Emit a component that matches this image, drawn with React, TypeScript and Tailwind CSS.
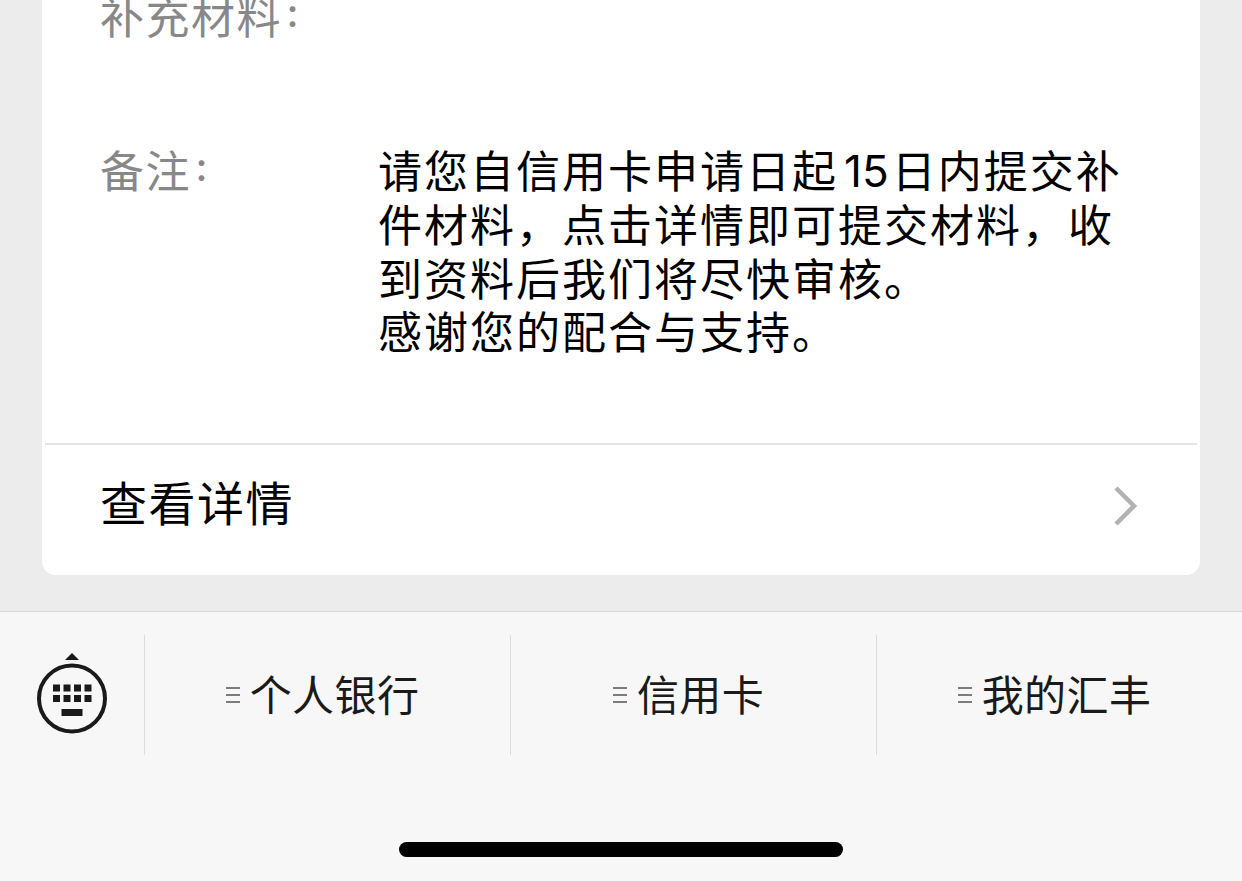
const menus = ["个人银行", "信用卡", "我的汇丰"];

function KeyboardIcon() {
  return (
    <svg width="72" height="84" viewBox="0 0 72 84" aria-hidden>
      <path d="M29 8 L36 1 L43 8 Z" fill="#1a1a1a" />
      <circle cx="36" cy="46.5" r="33" fill="none" stroke="#1a1a1a" strokeWidth="4" />
      <g fill="#1a1a1a">
        {[17, 27.5, 38, 48.5].map((x) => (
          <g key={x}>
            <rect x={x} y="32.5" width="7" height="7" />
            <rect x={x} y="43" width="7" height="7" />
          </g>
        ))}
        <rect x="25.5" y="57" width="21" height="7" />
      </g>
    </svg>
  );
}

function ListIcon() {
  return (
    <svg width="14" height="18" viewBox="0 0 14 18" className="shrink-0" aria-hidden>
      <path d="M0 2H14M0 9H14M0 16H14" stroke="#7c7c7c" strokeWidth="2" />
    </svg>
  );
}

function Label({ text }: { text: string }) {
  return (
    <dt className="w-[278px] shrink-0 tracking-[1.5px] text-[#888888]">
      {text}
      <span className="relative -top-[8px] ml-[3px] text-[30px] font-bold leading-none">：</span>
    </dt>
  );
}

function DetailCard() {
  return (
    <section className="mx-[42px] flex h-[575px] flex-col overflow-hidden rounded-b-[14px] bg-white">
      <dl className="-mt-[11px] h-[454px] shrink-0 pl-[58px] text-[44px] leading-[53.8px] tracking-[2px]">
        <div className="flex h-[154px]">
          <Label text="补充材料" />
        </div>
        <div className="flex">
          <Label text="备注" />
          <dd className="whitespace-nowrap text-black">
            请您自信用卡申请日起
            <span className="relative -top-[1px] ml-[6px] mr-[3px] font-['Inter'] leading-none tracking-[0px]">15</span>
            日内提交补
            <br />
            件材料，点击详情即可提交材料，收
            <br />
            到资料后我们将尽快审核。
            <br />
            感谢您的配合与支持。
          </dd>
        </div>
      </dl>
      <div className="mx-[3px] h-[2px] shrink-0 bg-[#e4e4e4]" />
      <button type="button" className="flex flex-1 items-center justify-between pb-[19px] pl-[58px] pr-[62px]">
        <span className="text-[47px] leading-[60px] tracking-[1.5px] text-black">查看详情</span>
        <svg width="24" height="40" viewBox="0 0 24 40" className="relative top-[5px]" aria-hidden>
          <path d="M2 2 L20 20 L2 38" fill="none" stroke="#b2b2b2" strokeWidth="4.5" />
        </svg>
      </button>
    </section>
  );
}

export default function App() {
  return (
    <div className="flex h-[881px] w-[1242px] flex-col overflow-hidden bg-[#ececec] font-['Noto_Sans_CJK_SC',sans-serif]">
      <main className="h-[611px] shrink-0">
        <DetailCard />
      </main>
      <footer className="flex flex-1 flex-col items-center border-t border-[#d9d9d9] bg-[#f7f7f7]">
        <nav className="mt-[23px] flex h-[120px] w-full">
          <button type="button" aria-label="键盘" className="flex w-[144px] items-center justify-center pb-[2px]">
            <KeyboardIcon />
          </button>
          {menus.map((label) => (
            <button
              key={label}
              type="button"
              className="flex w-[366px] items-center justify-center gap-[10px] border-l border-[#dcdcdc] pr-[10px]"
            >
              <ListIcon />
              <span className="pb-[4px] text-[42px] leading-[60px] tracking-[0.4px] text-[#1a1a1a]">{label}</span>
            </button>
          ))}
        </nav>
        <div className="mt-[87px] h-[15px] w-[444px] rounded-full bg-black" />
      </footer>
    </div>
  );
}
